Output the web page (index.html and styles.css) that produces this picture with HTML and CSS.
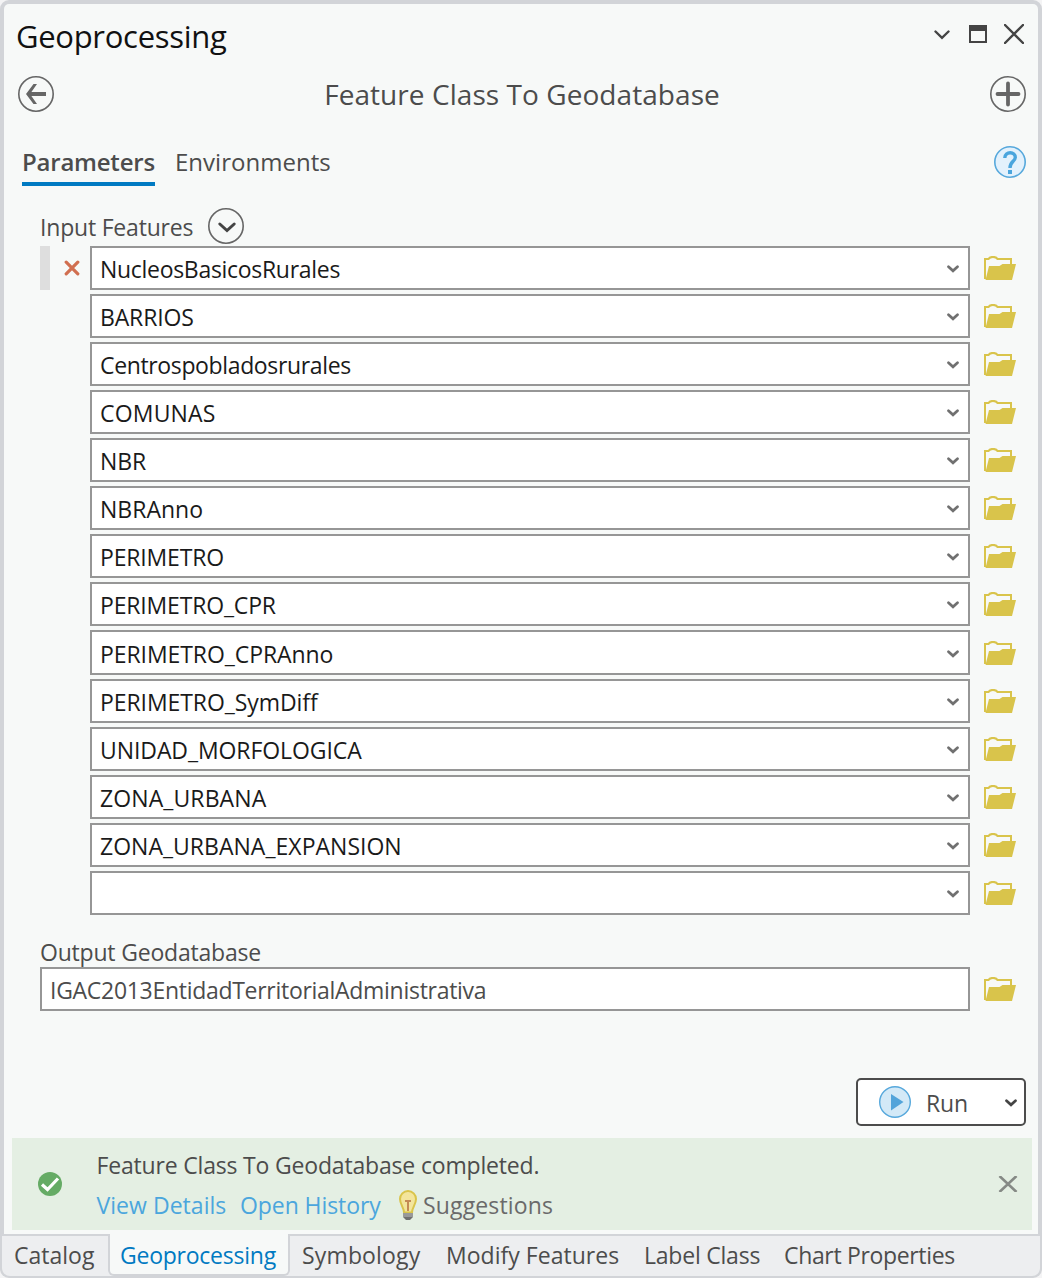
FILE: index.html
```html
<!DOCTYPE html>
<html lang="en">
<head>
<meta charset="utf-8">
<title>Geoprocessing</title>
<link rel="stylesheet" href="styles.css">
</head>
<body>
<svg class="defs" aria-hidden="true">
  <symbol id="folder" viewBox="0 0 32 24"><path d="M1 23V3h3.500C6 .2 12 .2 13.500 3H27v6" fill="none" stroke="#d9c44b" stroke-width="2"/><path d="M1.500 24L5 10h10.500L18.500 8H32l-4 16z" fill="#d9c44b"/></symbol>
  <symbol id="chev" viewBox="0 0 12 8"><path d="M1.500 1.700L6 5.800l4.500-4.100" fill="none" stroke="currentColor" stroke-width="2.700" stroke-linecap="round" stroke-linejoin="miter"/></symbol>
</svg>
<div class="window">
  <main class="pane">
    <header class="titlebar">
      <h1>Geoprocessing</h1>
      <div class="window-buttons">
        <svg class="drop" width="16" height="10" viewBox="0 0 16 10"><path d="M1.500 1.500L8 7.800l6.500-6.300" fill="none" stroke="#444" stroke-width="2.400" stroke-linecap="round"/></svg>
        <svg width="18" height="18" viewBox="0 0 18 18"><path d="M0 0h18v18H0zM2 6v10h14V6z" fill="#444" fill-rule="evenodd"/></svg>
        <svg width="20" height="20" viewBox="0 0 20 20"><path d="M1 1l18 18M19 1L1 19" stroke="#444" stroke-width="2.400" stroke-linecap="round"/></svg>
      </div>
    </header>
    <div class="toolbar">
      <svg width="36" height="36" viewBox="0 0 36 36" fill="none" stroke="#666"><circle cx="18" cy="18" r="17.200" stroke-width="1.600"/><path d="M28 18H10" stroke-width="4"/><path d="M8 18l7.500-10H19l-7 10 7 10h-3.500z" fill="#666" stroke="none"/></svg>
      <h2>Feature Class To Geodatabase</h2>
      <svg width="36" height="36" viewBox="0 0 36 36" fill="none" stroke="#666"><circle cx="18" cy="18" r="17.200" stroke-width="1.600"/><path d="M18 7.500v21M7.500 18h21" stroke-width="3.800" stroke-linecap="round"/></svg>
    </div>
    <nav class="views">
      <span class="view active">Parameters</span>
      <span class="view">Environments</span>
      <svg class="help" width="32" height="32" viewBox="0 0 32 32"><circle cx="16" cy="16" r="15.200" fill="#e3f1fc" stroke="#56a8dc" stroke-width="1.600"/><path d="M10.800 12C10.800 4.800 21.700 5.300 21.300 11.500C21 15.500 16 15.500 16 22" fill="none" stroke="#4aa5dd" stroke-width="3.400"/><path d="M14 24h4v4h-4z" fill="#4aa5dd"/></svg>
    </nav>
    <section class="inputs">
      <div class="label-row"><span>Input Features</span>
        <svg width="36" height="36" viewBox="0 0 36 36" fill="none"><circle cx="18" cy="18" r="17.200" stroke="#666" stroke-width="1.600"/><path d="M11.800 16l7.200 6.500L26.200 16" stroke="#444" stroke-width="3" stroke-linecap="round"/></svg>
      </div>
      <div class="rows">
        <div class="row"><span class="grip"></span><svg class="remove" width="16" height="16" viewBox="0 0 16 16"><path d="M2.200 2.200l11.600 11.600M13.800 2.200L2.200 13.800" stroke="#d16f50" stroke-width="3.200" stroke-linecap="round"/></svg><div class="field"><span class="v1">NucleosBasicosRurales</span><svg class="chev"><use href="#chev"/></svg></div><svg class="folder"><use href="#folder"/></svg></div>
        <div class="row"><div class="field"><span>BARRIOS</span><svg class="chev"><use href="#chev"/></svg></div><svg class="folder"><use href="#folder"/></svg></div>
        <div class="row"><div class="field"><span class="tight">Centrospobladosrurales</span><svg class="chev"><use href="#chev"/></svg></div><svg class="folder"><use href="#folder"/></svg></div>
        <div class="row"><div class="field"><span class="wide">COMUNAS</span><svg class="chev"><use href="#chev"/></svg></div><svg class="folder"><use href="#folder"/></svg></div>
        <div class="row"><div class="field"><span>NBR</span><svg class="chev"><use href="#chev"/></svg></div><svg class="folder"><use href="#folder"/></svg></div>
        <div class="row"><div class="field"><span class="even">NBRAnno</span><svg class="chev"><use href="#chev"/></svg></div><svg class="folder"><use href="#folder"/></svg></div>
        <div class="row"><div class="field"><span class="v2">PERIMETRO</span><svg class="chev"><use href="#chev"/></svg></div><svg class="folder"><use href="#folder"/></svg></div>
        <div class="row"><div class="field"><span class="v2">PERIMETRO_CPR</span><svg class="chev"><use href="#chev"/></svg></div><svg class="folder"><use href="#folder"/></svg></div>
        <div class="row tall"><div class="field"><span class="v3">PERIMETRO_CPRAnno</span><svg class="chev"><use href="#chev"/></svg></div><svg class="folder"><use href="#folder"/></svg></div>
        <div class="row"><div class="field"><span class="v3">PERIMETRO_SymDiff</span><svg class="chev"><use href="#chev"/></svg></div><svg class="folder"><use href="#folder"/></svg></div>
        <div class="row"><div class="field"><span class="v3">UNIDAD_MORFOLOGICA</span><svg class="chev"><use href="#chev"/></svg></div><svg class="folder"><use href="#folder"/></svg></div>
        <div class="row"><div class="field"><span class="zone">ZONA_URBANA</span><svg class="chev"><use href="#chev"/></svg></div><svg class="folder"><use href="#folder"/></svg></div>
        <div class="row"><div class="field"><span class="even">ZONA_URBANA_EXPANSION</span><svg class="chev"><use href="#chev"/></svg></div><svg class="folder"><use href="#folder"/></svg></div>
        <div class="row"><div class="field"><span></span><svg class="chev"><use href="#chev"/></svg></div><svg class="folder"><use href="#folder"/></svg></div>
      </div>
    </section>
    <section class="output">
      <div class="output-label">Output Geodatabase</div>
      <div class="row"><div class="field"><span>IGAC2013EntidadTerritorialAdministrativa</span></div><svg class="folder"><use href="#folder"/></svg></div>
    </section>
    <div class="run">
      <svg width="32" height="32" viewBox="0 0 32 32"><circle cx="16" cy="16" r="15.300" fill="#d3e9f7" stroke="#56a8dc" stroke-width="1.400"/><path d="M12 8l12.500 8L12 24.500z" fill="#53a4da"/></svg>
      <span>Run</span>
      <svg class="chev"><use href="#chev"/></svg>
    </div>
    <div class="message">
      <svg width="24" height="24" viewBox="0 0 24 24"><circle cx="12" cy="12" r="12" fill="#65ab65"/><path d="M4 12.500l5.500 5L20 6.500" fill="none" stroke="#fff" stroke-width="3.200"/></svg>
      <div class="message-text">
        <div class="done">Feature Class To Geodatabase completed.</div>
        <div class="links"><a class="details">View Details</a><a class="history">Open History</a>
          <svg width="18" height="30" viewBox="0 0 18 30"><path d="M5 22.500C5 17.500 1 14.500 1 9a8 8 0 0 1 16 0c0 5.500-4 8.500-4 13.500z" fill="#f3e59c" stroke="#d9c44b" stroke-width="2"/><path d="M6 11h6M9 11v10" fill="none" stroke="#c48b55" stroke-width="2"/><path d="M4 23h10v4H4z" fill="#999"/><path d="M4 27h10l-3 3H7z" fill="#707070"/></svg>
          <span class="suggest">Suggestions</span></div>
      </div>
      <svg width="20" height="16" viewBox="0 0 20 16"><path d="M1.500 0l17 16M18.500 0l-17 16" stroke="#858985" stroke-width="2.600"/></svg>
    </div>
  </main>
  <nav class="tabs">
    <span class="tab catalog">Catalog</span>
    <span class="tab current">Geoprocessing</span>
    <span class="tab symbology">Symbology</span>
    <span class="tab modify">Modify Features</span>
    <span class="tab labels">Label Class</span>
    <span class="tab chart">Chart Properties</span>
  </nav>
</div>
</body>
</html>
```
FILE: styles.css
```css
* { box-sizing: border-box; }
body {
  margin: 0;
  background: #f4f4f5;
  font-family: "Open Sans", "Noto Sans", sans-serif;
  font-size: 23px;
  letter-spacing: -0.14px;
  color: #4c4c4c;
  white-space: nowrap;
}
svg { display: block; flex: none; }
.defs { display: none; }
h1, h2 { margin: 0; font-weight: 400; }

.window {
  width: 1042px;
  height: 1278px;
  padding: 4px 4px 2px;
  background: #d2d4d8;
  border-radius: 9px;
}
.pane {
  height: 1230px;
  display: flex;
  flex-direction: column;
  background: #f7f9f8;
  border-radius: 5px 5px 0 0;
}

.titlebar {
  height: 64px;
  padding: 0 14px 0 12px;
  display: flex;
  align-items: center;
  justify-content: space-between;
}
h1 { font-size: 31px; line-height: 64px; letter-spacing: -0.3px; color: #111; }
.window-buttons {
  display: flex;
  align-items: center;
  gap: 17px;
  margin-top: -4px;
}
.drop { margin: 2px 2px 0 0; }
.toolbar {
  height: 52px;
  padding: 0 12px 0 14px;
  display: flex;
  align-items: center;
  justify-content: space-between;
}
h2 { font-size: 28px; line-height: 52px; letter-spacing: 0.06px; }

.views {
  height: 48px;
  margin-top: 18px;
  padding: 0 12px 0 18px;
  display: flex;
  align-items: center;
  gap: 20px;
}
.view { font-size: 24px; line-height: 48px; letter-spacing: 0.02px; }
.view.active {
  width: 133px;
  font-weight: 600;
  letter-spacing: -0.22px;
  box-shadow: inset 0 -4px #007ac2;
}
.help { margin-left: auto; }

.inputs { padding: 22px 22px 0 36px; }
.label-row {
  height: 36px;
  display: flex;
  align-items: center;
  gap: 15px;
}
.label-row span { width: 153px; line-height: 34px; padding-top: 2px; letter-spacing: -0.2px; }
.rows {
  margin-top: 2px;
  display: flex;
  flex-direction: column;
  gap: 4px;
}
.row {
  height: 44px;
  display: flex;
  align-items: center;
  justify-content: flex-end;
}
.row.tall { height: 45px; }
.grip { width: 10px; height: 44px; margin-right: auto; background: #dedede; }
.remove { margin-right: 10px; }
.field {
  width: 880px;
  height: 100%;
  padding: 2px 9px 0 8px;
  display: flex;
  align-items: center;
  justify-content: space-between;
  border: 2px solid #969696;
  background: #fff;
  color: #1a1a1a;
}
.tall .field { padding-top: 3px; }
.chev { width: 12px; height: 8px; margin-top: -1px; color: #707070; }
.folder { width: 32px; height: 24px; margin-left: 14px; }
.v1 { letter-spacing: -0.3px; }
.v2 { letter-spacing: -0.17px; }
.v3 { letter-spacing: -0.08px; }
.tight { letter-spacing: -0.36px; }
.wide { letter-spacing: 0.19px; }
.even { letter-spacing: 0.02px; }
.zone { letter-spacing: 0.1px; }

.output { padding: 22px 22px 0 36px; }
.output-label { line-height: 30px; letter-spacing: -0.2px; }
.output .field { width: 930px; color: #4c4c4c; letter-spacing: -0.29px; }

.run {
  width: 170px;
  height: 48px;
  margin: 67px 12px 0 auto;
  padding: 0 7px 0 21px;
  display: flex;
  align-items: center;
  border: 2px solid #4c4c4c;
  border-radius: 5px;
  background: #fff;
}
.run span { margin: 2px auto 0 15px; }
.run .chev { margin-top: 2px; color: #444; }

.message {
  height: 92px;
  margin: 12px 6px 0 8px;
  padding: 0 14px 0 26px;
  display: flex;
  align-items: center;
  background: #e4efe3;
}
.message-text { margin: 2px auto 0 34.5px; }
.done, .links { height: 40px; line-height: 40px; }
.done { letter-spacing: -0.18px; }
.links { display: flex; align-items: center; color: #4ba6dd; }
.details { width: 143.5px; letter-spacing: 0.04px; }
.history { width: 159px; letter-spacing: -0.08px; }
.suggest { margin-left: 6px; letter-spacing: 0.15px; color: #6a6a6a; }

.tabs {
  height: 40px;
  margin: 2px -2px 0;
  display: flex;
  line-height: 39px;
  background: #edeef0;
  border-radius: 0 0 8px 8px;
}
.tab { padding-left: 12px; }
.catalog { width: 106px; padding-left: 12px; letter-spacing: 0; }
.current {
  width: 182px;
  height: 42px;
  margin-top: -2px;
  padding: 2px 0 0 10px;
  border: solid #d2d4d8;
  border-width: 0 2px 2px;
  border-radius: 0 0 6px 6px;
  background: #f7f9f8;
  color: #007ac2;
  letter-spacing: -0.24px;
}
.symbology { width: 144px; letter-spacing: 0.15px; }
.modify { width: 198px; letter-spacing: 0.03px; }
.labels { width: 140px; letter-spacing: -0.22px; }
.chart { letter-spacing: -0.34px; }
```
